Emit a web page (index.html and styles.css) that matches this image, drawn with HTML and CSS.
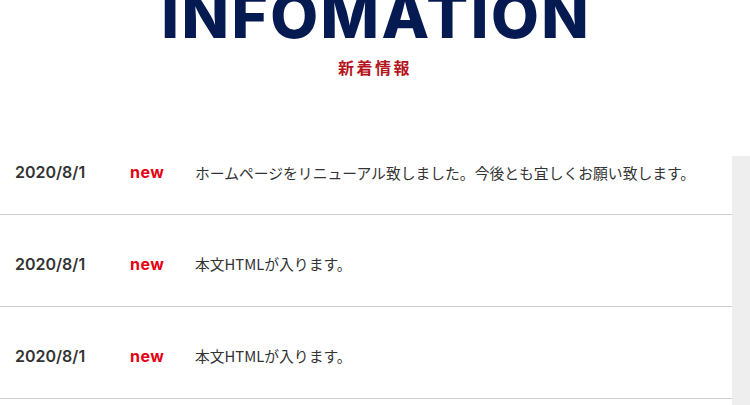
FILE: index.html
```html
<!DOCTYPE html>
<html lang="ja">
<head>
<meta charset="utf-8">
<link rel="stylesheet" href="styles.css">
</head>
<body>
<header class="heading">
  <h1 class="heading-en">INFOMATION</h1>
  <p class="heading-ja">新着情報</p>
</header>
<section class="news">
  <ul class="news-list">
    <li class="news-item">
      <span class="news-date">2020/8/1</span>
      <span class="news-tag">new</span>
      <span class="news-text">ホームページをリニューアル致しました。今後とも宜しくお願い致します。</span>
    </li>
    <li class="news-item">
      <span class="news-date">2020/8/1</span>
      <span class="news-tag">new</span>
      <span class="news-text">本文HTMLが入ります。</span>
    </li>
    <li class="news-item">
      <span class="news-date">2020/8/1</span>
      <span class="news-tag">new</span>
      <span class="news-text">本文HTMLが入ります。</span>
    </li>
  </ul>
  <div class="news-track"></div>
</section>
</body>
</html>
```
FILE: styles.css
```css
html, body {
  margin: 0;
  padding: 0;
  background: #fff;
  overflow: hidden;
}
body {
  width: 750px;
  height: 405px;
  font-family: "Noto Sans CJK JP", "Noto Sans", sans-serif;
  color: #333;
}
.heading {
  display: flex;
  flex-direction: column;
  align-items: center;
  margin-top: -15px;
}
.heading-en {
  margin: 0;
  font-family: "Inter", "Lato", sans-serif;
  font-weight: 800;
  font-size: 62px;
  line-height: 62px;
  letter-spacing: 2.5px;
  color: #061a52;
  padding-left: 2.5px;
}
.heading-ja {
  margin: 10px 0 0;
  font-family: "Noto Sans CJK JP", sans-serif;
  font-weight: 700;
  font-size: 16px;
  line-height: 20px;
  letter-spacing: 2.5px;
  color: #b5151d;
}
.news {
  display: flex;
  margin-top: 47px;
}
.news-list {
  list-style: none;
  margin: 0;
  padding: 0;
  flex: 1;
}
.news-item {
  display: flex;
  align-items: center;
  height: 91px;
  border-bottom: 1px solid #ccc;
  padding-top: 6px;
  box-sizing: border-box;
}
.news-item + .news-item {
  height: 92px;
}
.news-date {
  width: 115px;
  padding-left: 15px;
  font-family: "Inter", "Lato", sans-serif;
  font-weight: 600;
  font-size: 16px;
  color: #333;
}
.news-tag {
  width: 65px;
  font-family: "Inter", "Lato", sans-serif;
  font-weight: 700;
  font-size: 16px;
  letter-spacing: 0.5px;
  color: #e60012;
}
.news-text {
  font-size: 14.8px;
  color: #333;
}
.news-track {
  width: 18px;
  margin-top: 32px;
  height: 300px;
  background: #eee;
}
```
